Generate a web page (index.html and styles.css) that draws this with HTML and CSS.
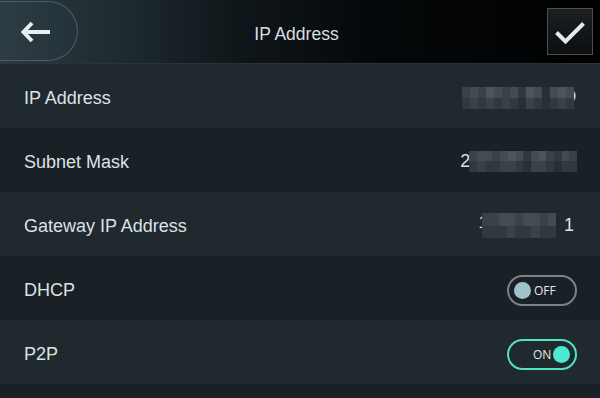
FILE: index.html
```html
<!DOCTYPE html>
<html>
<head>
<meta charset="utf-8">
<link rel="stylesheet" href="styles.css">
</head>
<body>
<div class="screen">
  <header class="topbar">
    <div class="back">
      <svg width="30" height="22" viewBox="0 0 30 22"><path d="M29 11 H3 M11 2 L2.5 11 L11 20" fill="none" stroke="#e9eff1" stroke-width="4" stroke-linejoin="miter" stroke-linecap="butt"/></svg>
    </div>
    <div class="title">IP Address</div>
    <div class="confirm">
      <svg width="46" height="47" viewBox="0 0 46 47"><path d="M9.5 24.5 L18.5 33.5 L36.5 15.5" fill="none" stroke="#e3eaec" stroke-width="4"/></svg>
    </div>
  </header>
  <div class="list">
    <div class="row light">
      <span class="label">IP Address</span>
      <div class="value v1">
        <div class="mosaic m-ip">
          <i class="c3"></i><i class="c4"></i><i class="c3"></i><i class="c5"></i><i class="c4"></i><i class="c3"></i><i class="c4"></i><i class="c2"></i><i class="c5"></i><i class="c4"></i><i class="c1"></i><i class="c4"></i><i class="c5"></i><i class="c4"></i>
          <i class="c2"></i><i class="c3"></i><i class="c2"></i><i class="c3"></i><i class="c2"></i><i class="c3"></i><i class="c2"></i><i class="c1"></i><i class="c3"></i><i class="c2"></i><i class="c1"></i><i class="c2"></i><i class="c3"></i><i class="c2"></i>
        </div>
        <span class="tail">9</span>
      </div>
    </div>
    <div class="row dark">
      <span class="label">Subnet Mask</span>
      <div class="value v2">
        <span class="digit">2</span>
        <div class="mosaic m-mask">
          <i class="c3"></i><i class="c4"></i><i class="c4"></i><i class="c3"></i><i class="c4"></i><i class="c5"></i><i class="c4"></i><i class="c2"></i><i class="c4"></i><i class="c5"></i><i class="c3"></i><i class="c2"></i><i class="c4"></i><i class="c3"></i>
          <i class="c2"></i><i class="c3"></i><i class="c2"></i><i class="c2"></i><i class="c3"></i><i class="c3"></i><i class="c2"></i><i class="c1"></i><i class="c3"></i><i class="c3"></i><i class="c2"></i><i class="c1"></i><i class="c2"></i><i class="c2"></i>
        </div>
      </div>
    </div>
    <div class="row light">
      <span class="label">Gateway IP Address</span>
      <div class="value v3">
        <span class="digit first">1</span>
        <div class="mosaic m-gw">
          <i class="c3"></i><i class="c3"></i><i class="c4"></i><i class="c4"></i><i class="c3"></i><i class="c4"></i><i class="c4"></i><i class="c3"></i><i class="c4"></i>
          <i class="c2"></i><i class="c2"></i><i class="c2"></i><i class="c3"></i><i class="c2"></i><i class="c2"></i><i class="c3"></i><i class="c2"></i><i class="c2"></i>
        </div>
        <span class="digit last">1</span>
      </div>
    </div>
    <div class="row dark">
      <span class="label">DHCP</span>
      <div class="toggle off"><span class="knob"></span><span class="state">OFF</span></div>
    </div>
    <div class="row light">
      <span class="label">P2P</span>
      <div class="toggle on"><span class="state">ON</span><span class="knob"></span></div>
    </div>
  </div>
</div>
</body>
</html>
```
FILE: styles.css
```css
* { box-sizing: border-box; }
html, body { margin: 0; padding: 0; }
body {
  width: 600px;
  height: 398px;
  overflow: hidden;
  background: #192126;
  font-family: "Liberation Sans", Arial, sans-serif;
}
.screen { width: 600px; height: 398px; display: flex; flex-direction: column; }
.topbar {
  height: 64px;
  flex: none;
  display: flex;
  align-items: center;
  background: linear-gradient(to right, #2b3b41 0%, #1d292e 22%, #0f1619 40%, #05080a 62%, #000 100%);
  border-bottom: 1px solid #2a3338;
}
.back {
  width: 78px;
  height: 60px;
  margin-top: -1px;
  border: 1px solid #4d5d63;
  border-left: none;
  border-radius: 0 30px 30px 0;
  display: flex;
  align-items: center;
  padding-left: 21px;
  padding-top: 1px;
  background: linear-gradient(to right, #2d3d43, #24323a);
}
.back svg { display: block; }
.title {
  flex: 1;
  text-align: center;
  color: #d9dee0;
  font-size: 17.5px;
  padding-top: 5px;
  margin-right: 32px;
}
.confirm {
  width: 46px;
  height: 47px;
  margin-right: 7px;
  margin-top: -1px;
  border: 1px solid #4c5053;
  background: linear-gradient(to bottom, #1c2023, #0c0e10);
}
.confirm svg { display: block; margin: -1px; }
.list { display: flex; flex-direction: column; }
.row {
  height: 64px;
  display: flex;
  align-items: center;
  justify-content: space-between;
  padding: 0 24px 0 24px;
}
.row.light { background: #1f292e; }
.row.dark { background: #192126; }
.label {
  color: #dce2e5;
  font-size: 18px;
  padding-top: 5px;
}
.value { display: flex; align-items: center; }
.mosaic {
  display: grid;
  position: relative;
  z-index: 1;
}
.mosaic i { display: block; }
.m-ip { grid-template-columns: repeat(14, 8px); grid-template-rows: 11px 11px; }
.m-mask { grid-template-columns: repeat(14, 7.7px); grid-template-rows: 10px 11px; }
.m-gw { grid-template-columns: repeat(9, 8.2px); grid-template-rows: 13px 12px; margin-left: -5px; margin-right: 8px; }
.c1 { background: #273035; }
.c2 { background: #30393e; }
.c3 { background: #394247; }
.c4 { background: #434c51; }
.c5 { background: #4c555a; }
.v1 { margin-right: 0px; padding-top: 3px; }
.tail { color: #dce2e5; font-size: 14px; margin-left: -6px; padding-bottom: 4px; }
.v2 { margin-right: -1px; padding-top: 2px; }
.digit { color: #dce2e5; font-size: 18px; }
.v2 .digit { margin-right: -1px; }
.v3 { padding-top: 3px; margin-right: 2px; }
.digit.first { font-size: 16px; margin-top: -6px; }
.toggle {
  width: 70px;
  height: 31px;
  border-radius: 16px;
  display: flex;
  align-items: center;
  margin-right: -1px;
  margin-top: 4px;
}
.toggle.off { border: 2px solid #7c8387; padding-left: 5px; }
.toggle.on { border: 2.5px solid #52e3c6; padding-left: 24px; }
.knob { width: 17px; height: 17px; border-radius: 50%; display: block; }
.off .knob { background: #a1c2c8; }
.on .knob { background: #4ee9d2; }
.state { color: #e4e8ea; font-size: 12px; font-family: "Open Sans", "Liberation Sans", sans-serif; }
.off .state { margin-left: 3px; }
.on .state { margin-right: 2px; }
```
